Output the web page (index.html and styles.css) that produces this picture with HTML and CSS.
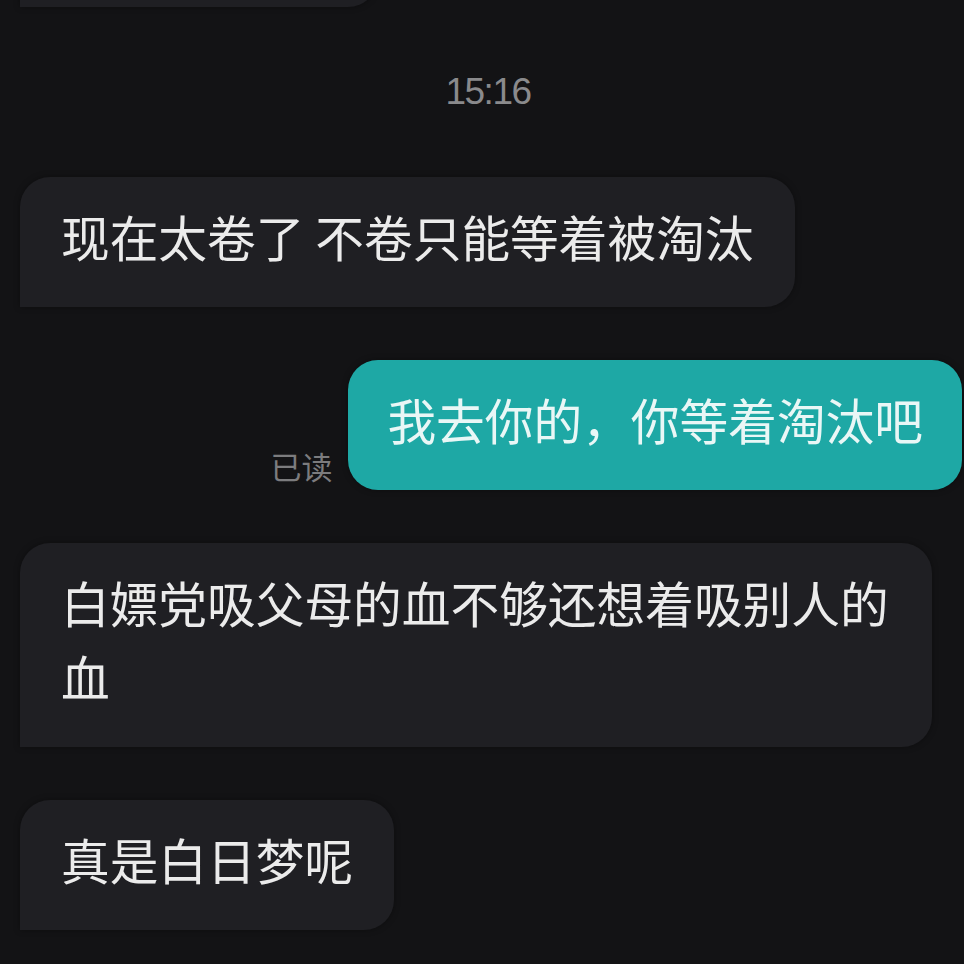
FILE: index.html
```html
<!DOCTYPE html>
<html>
	<head>
		<meta charset="UTF-8">
		<title>聊天</title>
		<link rel="stylesheet" href="styles.css">
	</head>
	<body>
		<div class="chat">
			<div class="msg left">
				<div class="bubble prev"></div>
			</div>

			<div class="time">15:16</div>

			<div class="msg left">
				<div class="bubble">现在太卷了 不卷只能等着被淘汰</div>
			</div>

			<div class="msg right">
				<span class="read">已读</span>
				<div class="bubble mine">我去你的，你等着淘汰吧</div>
			</div>

			<div class="msg left">
				<div class="bubble">白嫖党吸父母的血不够还想着吸别人的血</div>
			</div>

			<div class="msg left">
				<div class="bubble">真是白日梦呢</div>
			</div>
		</div>
	</body>
</html>
```

FILE: styles.css
```css
*{
	padding: 0px;
	margin: 0px;
	box-sizing: border-box;
}

body {
	background: #131315;
	width: 964px;
	height: 964px;
	overflow: hidden;
	font-family: "Noto Sans CJK SC", "Liberation Sans", sans-serif;
}

.chat {
	display: flex;
	flex-direction: column;
	gap: 53px;
	padding: 0 2px 0 20px;
}

.msg {
	display: flex;
	align-items: flex-end;
}

.msg.right {
	justify-content: flex-end;
	gap: 16px;
}

.bubble {
	max-width: 912px;
	padding: 22px 41px 34px;
	font-size: 48.7px;
	line-height: 74px;
	color: #ebebeb;
	background: #1f1f23;
	border-radius: 30px 30px 30px 0;
	box-shadow: 0 0 6px rgba(0, 0, 0, 0.35);
}

/* 上一条消息，只露出底边 */
.bubble.prev {
	width: 358px;
	height: 130px;
	margin-top: -123px;
}

.bubble.mine {
	padding: 22px 39px 34px;
	background: #1ea8a5;
	color: #e9f7f6;
	border-radius: 30px;
}

.time {
	margin: 12px 0 12px;
	text-align: center;
	font-family: "Liberation Sans", sans-serif;
	font-size: 37px;
	letter-spacing: -1.5px;
	line-height: 40px;
	color: #8a8a8c;
	padding-right: 6px;
}

.read {
	font-size: 31px;
	line-height: 31px;
	color: #7c7c7e;
	margin-bottom: 9px;
}
```
